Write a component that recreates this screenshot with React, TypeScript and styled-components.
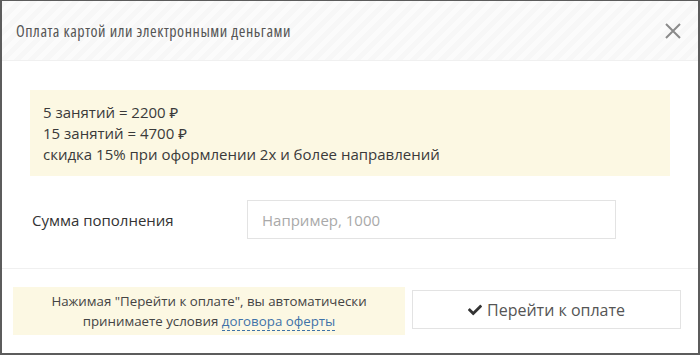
import React from "react";
import styled, { createGlobalStyle } from "styled-components";
import { FaCheck } from "react-icons/fa";

const GlobalStyle = createGlobalStyle`
  html, body {
    margin: 0;
    padding: 0;
    background: #ffffff;
  }
  body {
    font-family: "Open Sans", "Noto Sans", sans-serif;
    color: #333;
  }
`;

const Modal = styled.div`
  box-sizing: border-box;
  width: 700px;
  height: 355px;
  border: 2px solid #5c5c5c;
  border-top-width: 1px;
  background: #fff;
  display: flex;
  flex-direction: column;
`;

const Header = styled.div`
  height: 59px;
  flex-shrink: 0;
  display: flex;
  align-items: center;
  justify-content: space-between;
  padding: 0 16px 0 14px;
  border-bottom: 1px solid #f0f0f0;
  background: repeating-linear-gradient(
    135deg,
    #f7f7f7 0px,
    #f7f7f7 5px,
    #fbfbfb 5px,
    #fbfbfb 10px
  );
`;

const Title = styled.h4`
  margin: 0;
  font-size: 16px;
  font-weight: 400;
  font-stretch: 75%;
  letter-spacing: 0.55px;
  color: #555;
`;

const Close = styled.button`
  border: none;
  background: none;
  padding: 0;
  width: 18px;
  height: 18px;
  cursor: pointer;
  display: flex;
`;

const Body = styled.div`
  padding: 29px 28px 0 28px;
  display: flex;
  flex-direction: column;
  height: 208px;
  flex-shrink: 0;
  box-sizing: border-box;
  border-bottom: 1px solid #f0f0f0;
`;

const Alert = styled.div<{ $center?: boolean }>`
  background: #fcf8e3;
  color: #3a3a3a;
  font-size: 15px;
  line-height: 21px;
  padding: 12px 13px 11px;
  text-align: ${(p) => (p.$center ? "center" : "left")};
`;

const Row = styled.div`
  display: flex;
  align-items: center;
  margin-top: 24px;
`;

const Label = styled.label`
  width: 217px;
  padding-left: 2px;
  box-sizing: border-box;
  font-size: 15px;
  color: #333;
`;

const Input = styled.input`
  box-sizing: border-box;
  width: 369px;
  height: 39px;
  border: 1px solid #e3e3e3;
  padding: 0 14px;
  font-family: "Open Sans", sans-serif;
  font-size: 15px;
  color: #555;
  outline: none;
  &::placeholder {
    color: #a9a9a9;
  }
`;

const Footer = styled.div`
  flex: 1;
  display: flex;
  align-items: flex-start;
  padding: 18px 17px 0 11px;
  gap: 7px;
`;

const Notice = styled(Alert)`
  width: 392px;
  box-sizing: border-box;
  font-size: 13.3px;
  line-height: 20px;
  padding: 4px 8px 4px;
  color: #444;
`;

const Link = styled.a`
  color: #3f73a8;
  text-decoration: none;
  border-bottom: 1px dashed #3f73a8;
`;

const PayButton = styled.button`
  box-sizing: border-box;
  margin-top: 3px;
  flex: 1;
  height: 39px;
  background: #fff;
  border: 1px solid #e3e3e3;
  font-family: "Open Sans", sans-serif;
  font-size: 16px;
  color: #555;
  display: flex;
  align-items: center;
  justify-content: center;
  gap: 5px;
  cursor: pointer;
  svg {
    color: #333;
    width: 14px;
    height: 14px;
  }
`;

export default function App() {
  return (
    <>
      <GlobalStyle />
      <Modal>
        <Header>
          <Title>Оплата картой или электронными деньгами</Title>
          <Close aria-label="Закрыть">
            <svg width="18" height="18" viewBox="0 0 18 18">
              <path d="M2 2 L16 16 M16 2 L2 16" stroke="#8a8a8a" strokeWidth="2" />
            </svg>
          </Close>
        </Header>
        <Body>
          <Alert>
            5 занятий = 2200 ₽
            <br />
            15 занятий = 4700 ₽
            <br />
            скидка 15% при оформлении 2х и более направлений
          </Alert>
          <Row>
            <Label>Сумма пополнения</Label>
            <Input placeholder="Например, 1000" />
          </Row>
        </Body>
        <Footer>
          <Notice $center>
            Нажимая "Перейти к оплате", вы автоматически
            <br />
            принимаете условия <Link href="#">договора оферты</Link>
          </Notice>
          <PayButton>
            <FaCheck />
            Перейти к оплате
          </PayButton>
        </Footer>
      </Modal>
    </>
  );
}
